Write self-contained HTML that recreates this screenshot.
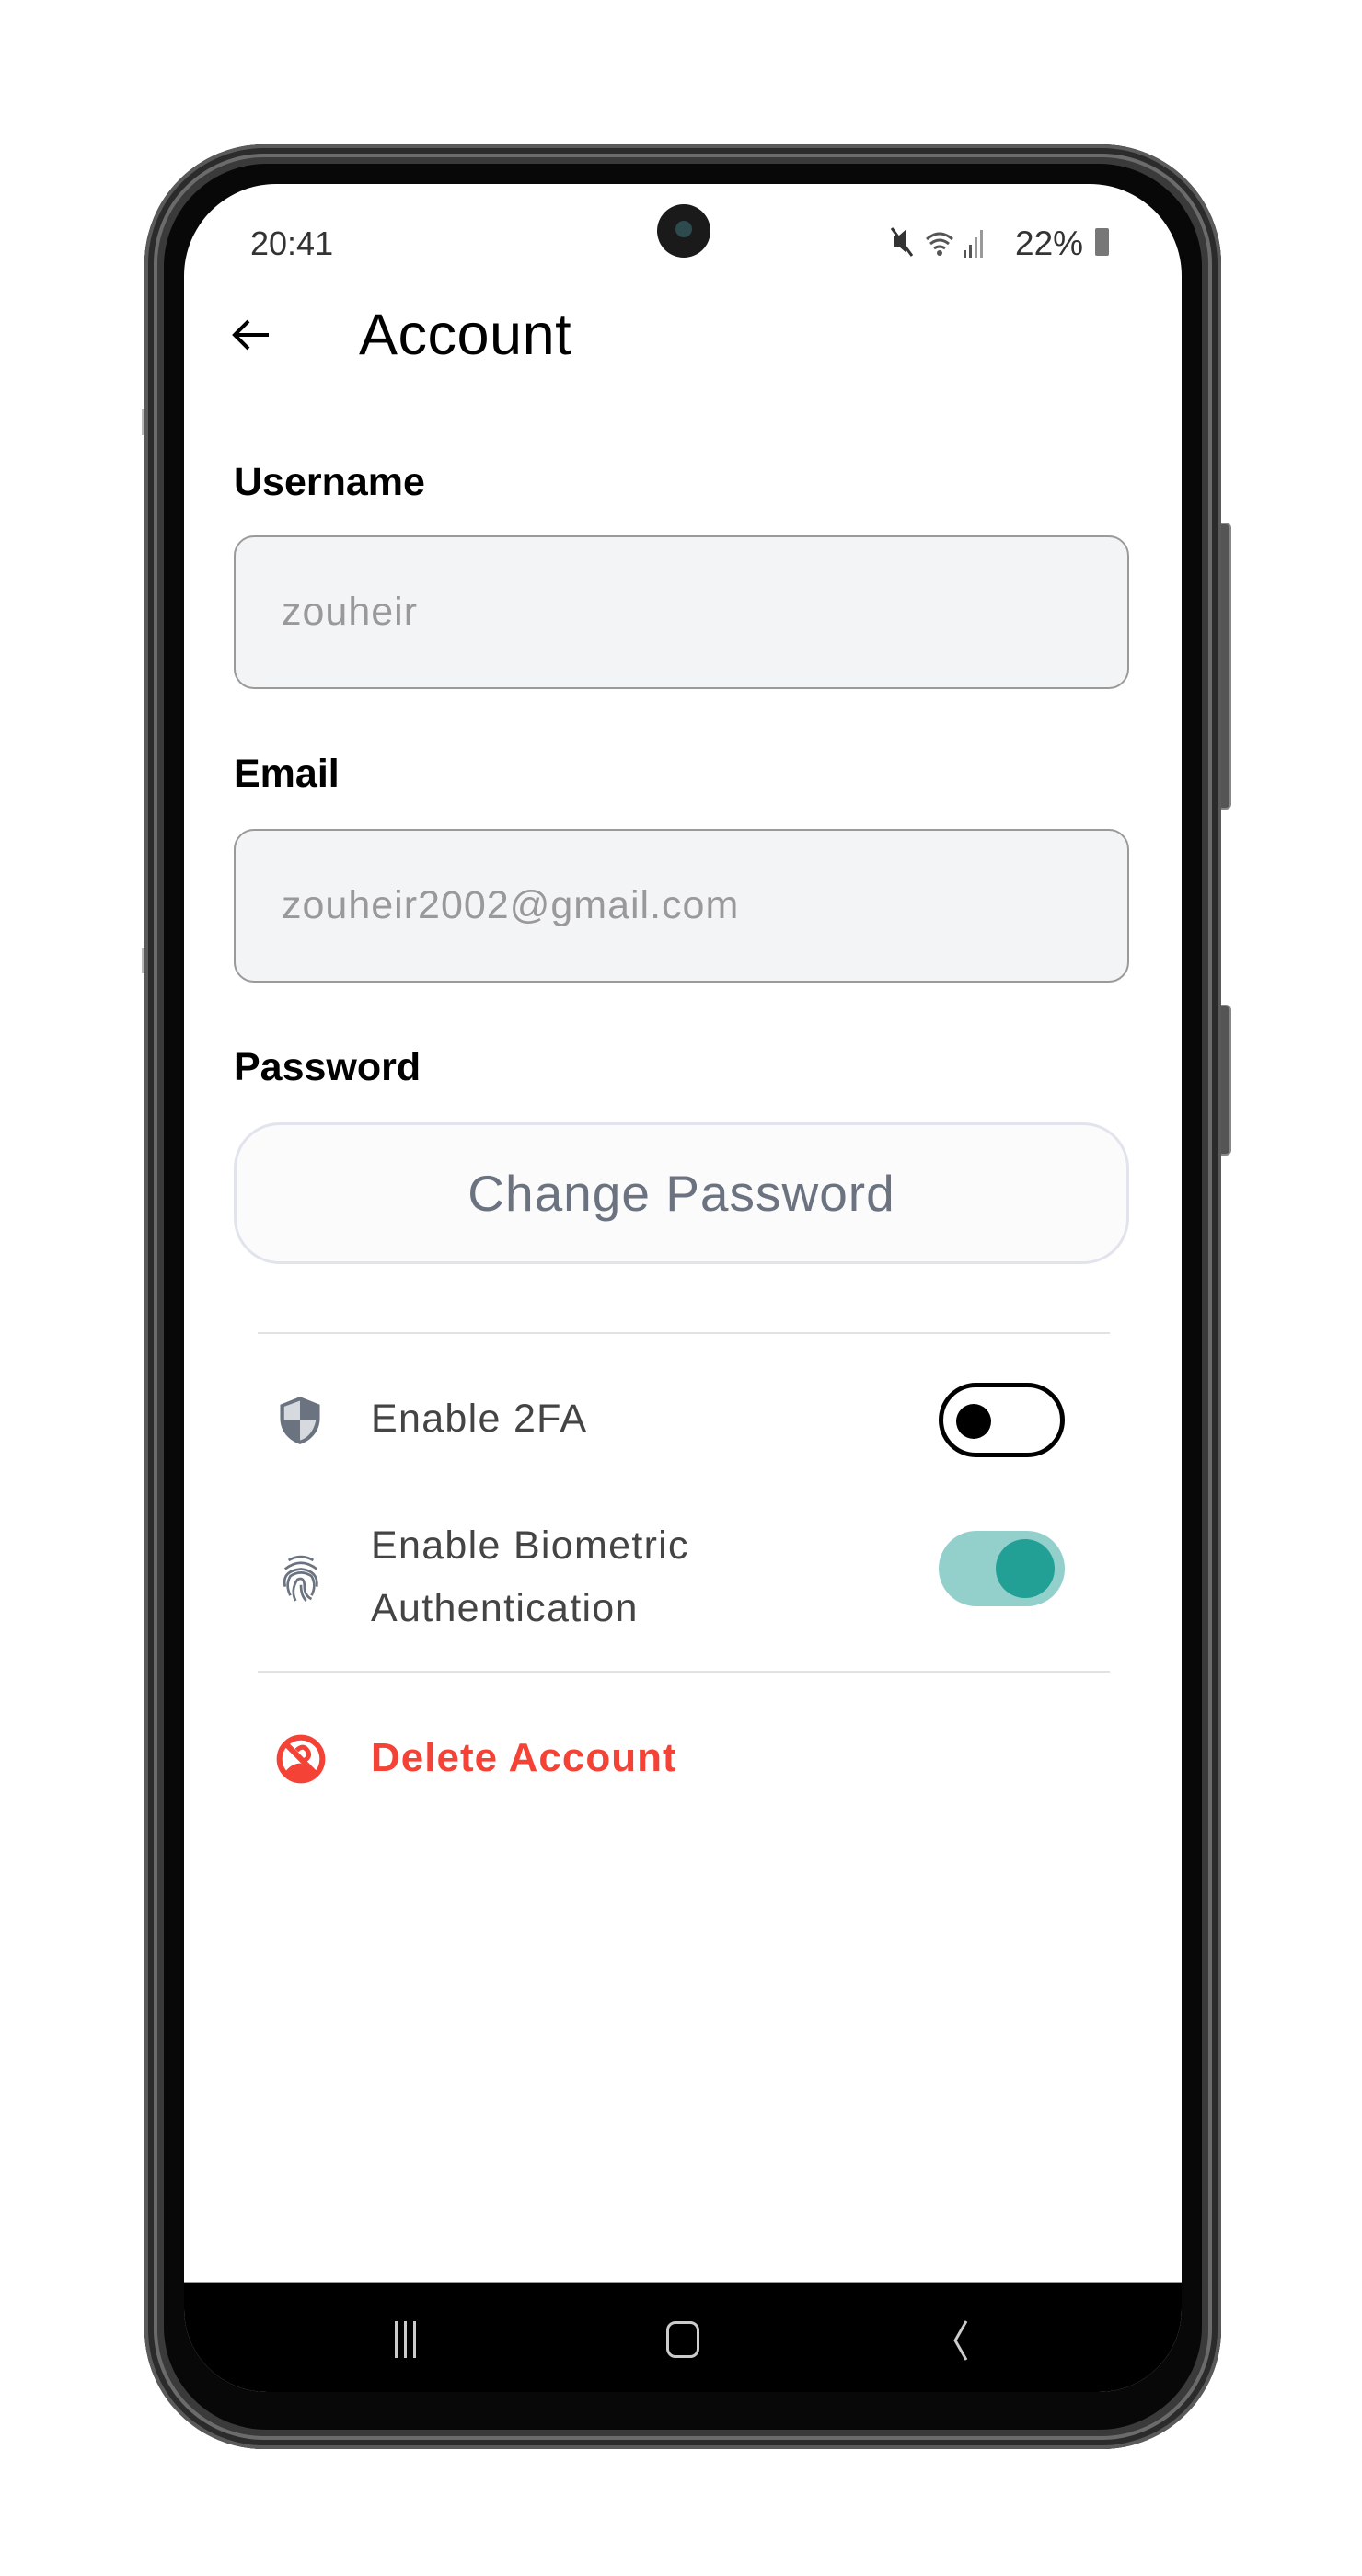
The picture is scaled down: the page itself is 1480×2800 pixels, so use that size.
<!DOCTYPE html>
<html><head><meta charset="utf-8"><style>
html,body{margin:0;padding:0;background:#fff;}
body{width:1480px;height:2800px;position:relative;overflow:hidden;font-family:"Liberation Sans",sans-serif;}
.abs{position:absolute;}
.phone{left:157px;top:157px;width:1170px;height:2505px;border-radius:130px;background:#3a3a3a;box-shadow:inset 0 0 0 4px #5a5a5a,inset 0 0 0 10px #2b2b2b,inset 0 0 0 14px #6b6b6b;}
.bezel{left:178px;top:178px;width:1128px;height:2463px;border-radius:112px;background:#080808;}
.screen{left:200px;top:200px;width:1084px;height:2400px;border-radius:100px 100px 90px 90px;background:#fff;overflow:hidden;}
.nav{left:0;top:2280px;width:1084px;height:120px;background:#000;border-top:1px solid #999;}
.label{font-weight:bold;font-size:43px;color:#000;}
.field{width:973px;height:167px;border:2px solid #9a9a9a;border-radius:22px;background:#f3f4f6;box-sizing:border-box;}
.field span{position:absolute;left:50px;top:0;line-height:163px;font-size:43px;color:#999;letter-spacing:1px;}
.rowtxt{font-size:43px;color:#444;letter-spacing:1.3px;}
</style></head><body>
<div class="abs" style="left:154px;top:445px;width:10px;height:28px;background:#bbb;"></div>
<div class="abs" style="left:154px;top:1030px;width:10px;height:28px;background:#bbb;"></div>
<div class="abs" style="left:1320px;top:568px;width:18px;height:312px;border-radius:6px;background:#555;border:2px solid #888;box-sizing:border-box;"></div>
<div class="abs" style="left:1320px;top:1092px;width:18px;height:164px;border-radius:6px;background:#555;border:2px solid #888;box-sizing:border-box;"></div>
<div class="abs phone"></div>
<div class="abs bezel"></div>
<div class="abs screen">
  <div class="abs" style="left:72px;top:44px;font-size:36px;color:#333;">20:41</div>
  <div class="abs" style="left:514px;top:22px;width:58px;height:58px;border-radius:50%;background:#1a1a1a;"><div class="abs" style="left:20px;top:18px;width:18px;height:18px;border-radius:50%;background:#2d4a4f;"></div></div>
  <svg class="abs" style="left:765px;top:42px" width="200" height="44" viewBox="0 0 200 44">
    <path d="M6 14h6l8-7v26l-8-7H6z" fill="#333"/><path d="M4 6l22 30" stroke="#333" stroke-width="3"/>
    <path d="M42 18q14-12 28 0M46 23q10-8 20 0M50 28q6-4 12 0" stroke="#555" stroke-width="3" fill="none"/><circle cx="56" cy="33" r="3" fill="#555"/>
    <rect x="82" y="30" width="3" height="8" fill="#555"/><rect x="88" y="24" width="3" height="14" fill="#555"/><rect x="94" y="16" width="3" height="22" fill="#999"/><rect x="100" y="8" width="3" height="30" fill="#999"/>
  </svg>
  <div class="abs" style="left:903px;top:44px;font-size:37px;color:#333;">22%</div>
  <div class="abs" style="left:990px;top:48px;width:15px;height:30px;background:#777;border-radius:2px;"></div>
  <svg class="abs" style="left:48px;top:140px" width="50" height="50" viewBox="0 0 50 50"><path d="M44 24H8M22 9L7 24l15 15" stroke="#000" stroke-width="4" fill="none"/></svg>
  <div class="abs" style="left:190px;top:128px;font-size:63px;color:#000;letter-spacing:0.5px;">Account</div>
  <div class="abs label" style="left:54px;top:300px;">Username</div>
  <div class="abs field" style="left:54px;top:382px;"><span>zouheir</span></div>
  <div class="abs label" style="left:54px;top:617px;">Email</div>
  <div class="abs field" style="left:54px;top:701px;"><span>zouheir2002@gmail.com</span></div>
  <div class="abs label" style="left:54px;top:936px;">Password</div>
  <div class="abs" style="left:54px;top:1020px;width:973px;height:154px;box-sizing:border-box;border:3px solid #e1e4ec;border-radius:50px;background:#fbfbfc;text-align:center;line-height:148px;font-size:55px;color:#6b7280;letter-spacing:1px;">Change Password</div>
  <div class="abs" style="left:80px;top:1248px;width:926px;height:2px;background:#e2e2e2;"></div>
  <svg class="abs" style="left:100px;top:1316px" width="52" height="56" viewBox="0 0 24 26"><path d="M12 1L2 5v7c0 6 4 11 10 13 6-2 10-7 10-13V5z" fill="#6b7280"/><path d="M12 3v10H4V6l8-3zM12 13h8c-1 5-4 9-8 10z" fill="#d6d9de"/></svg>
  <div class="abs rowtxt" style="left:203px;top:1318px;">Enable 2FA</div>
  <div class="abs" style="left:820px;top:1303px;width:137px;height:81px;border:5px solid #000;border-radius:41px;box-sizing:border-box;"><div class="abs" style="left:14px;top:18px;width:38px;height:38px;border-radius:50%;background:#000;"></div></div>
  <svg class="abs" style="left:104px;top:1486px" width="46" height="62" viewBox="0 0 24 32" fill="none" stroke="#6b7280" stroke-width="1.4"><path d="M5 5q7-4 14 0"/><path d="M3 10q9-7 18 0"/><path d="M3 20q-2-9 9-10q10 1 9 10"/><path d="M6 25q-3-6 0-11q6-4 12 0q3 5 0 11"/><path d="M9 28q-3-6 1-12q4-2 4 4q0 5 4 7"/><path d="M12 19q0 6 3 9"/></svg>
  <div class="abs rowtxt" style="left:203px;top:1446px;line-height:68px;">Enable Biometric<br>Authentication</div>
  <div class="abs" style="left:820px;top:1464px;width:137px;height:82px;border-radius:41px;background:#93d0cc;"><div class="abs" style="left:62px;top:9px;width:64px;height:64px;border-radius:50%;background:#22a096;"></div></div>
  <div class="abs" style="left:80px;top:1616px;width:926px;height:2px;background:#e2e2e2;"></div>
  <svg class="abs" style="left:99px;top:1684px" width="56" height="56" viewBox="0 0 24 24"><circle cx="12" cy="12" r="10" fill="none" stroke="#f44336" stroke-width="2.6"/><path d="M4 19q3-5 8-5l3 2q2 2 4 4q-3 3-7 3q-5 0-8-4z" fill="#f44336"/><path d="M5 5l14 14" stroke="#f44336" stroke-width="2.6"/><path d="M10 8q3-3 5 0t-2 5" fill="none" stroke="#f44336" stroke-width="2.2"/></svg>
  <div class="abs" style="left:203px;top:1686px;font-size:44px;font-weight:bold;color:#f44336;letter-spacing:1px;">Delete Account</div>
  <div class="abs nav">
    <div class="abs" style="left:229px;top:42px;width:3px;height:40px;background:#ccc;"></div>
    <div class="abs" style="left:239px;top:42px;width:3px;height:40px;background:#ccc;"></div>
    <div class="abs" style="left:249px;top:42px;width:3px;height:40px;background:#ccc;"></div>
    <div class="abs" style="left:524px;top:42px;width:36px;height:40px;border:3px solid #ccc;border-radius:10px;box-sizing:border-box;"></div>
    <svg class="abs" style="left:832px;top:40px" width="24" height="46" viewBox="0 0 24 46"><path d="M18 2L6 23l12 21" stroke="#ccc" stroke-width="3" fill="none"/></svg>
  </div>
</div>
</body></html>
